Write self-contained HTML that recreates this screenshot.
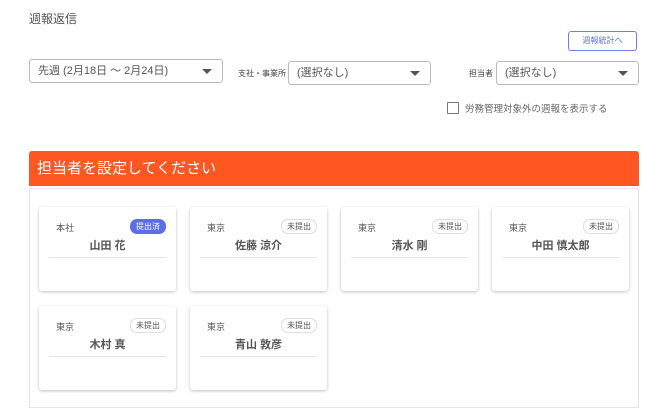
<!DOCTYPE html>
<html><head><meta charset="utf-8"><style>
body{margin:0;width:670px;height:416px;background:#fff;font-family:"Liberation Sans","Noto Sans CJK JP",sans-serif;color:#333;position:relative;overflow:hidden}
.a{position:absolute}
.sel{position:absolute;border:1px solid #bbb;border-radius:3px;background:#fff;font-size:11px;color:#555;box-sizing:border-box;padding-left:8px;line-height:22px}
.sel:after{content:"";position:absolute;right:10px;top:9px;border-left:5px solid transparent;border-right:5px solid transparent;border-top:5px solid #555}
.lbl{position:absolute;font-size:8px;color:#444}
.card{position:absolute;width:137px;height:84px;background:#fff;border-radius:3px;box-shadow:0 1px 3px rgba(0,0,0,.25)}
.loc{position:absolute;left:17px;top:14px;font-size:9px;color:#555}
.bd{position:absolute;right:10px;top:12px;height:13px;width:34px;text-align:center;border-radius:7px;font-size:8px;line-height:13px;border:1px solid #ddd;color:#555;background:#fff}
.bd.on{background:#5a6ee8;border-color:#5a6ee8;color:#fff}
.nm{position:absolute;left:0;right:0;top:30px;text-align:center;font-size:11px;font-weight:bold;color:#555}
.ln{position:absolute;left:10px;right:10px;top:50px;border-top:1px solid #e5e5e5}
</style></head><body>
<div class="a" style="left:29px;top:10px;font-size:12px;color:#555">週報返信</div>
<div class="a" style="left:568px;top:31px;width:69px;height:20px;box-sizing:border-box;border:1px solid #6c7ee8;border-radius:3px;color:#5a6ee8;font-size:8px;text-align:center;line-height:18px">週報統計へ</div>
<div class="sel" style="left:29px;top:59px;width:194px;height:24px">先週 (2月18日 〜 2月24日)</div>
<div class="lbl" style="left:238px;top:68px">支社・事業所</div>
<div class="sel" style="left:288px;top:61px;width:143px;height:24px">(選択なし)</div>
<div class="lbl" style="left:469px;top:68px">担当者</div>
<div class="sel" style="left:496px;top:61px;width:143px;height:24px">(選択なし)</div>
<div class="a" style="left:447px;top:102px;width:10px;height:10px;border:1.5px solid #777;border-radius:1px"></div>
<div class="a" style="left:465px;top:101px;font-size:9.5px;color:#666">労務管理対象外の週報を表示する</div>
<div class="a" style="left:29px;top:151px;width:610px;height:35px;background:#ff5722;border-radius:3px 3px 0 0;color:#fff;font-size:15px;line-height:35px;padding-left:8px;box-sizing:border-box">担当者を設定してください</div>
<div class="a" style="left:29px;top:188px;width:610px;height:220px;border:1px solid #e4e4e4;box-sizing:border-box"></div>
<div class="card" style="left:39px;top:207px"><div class="loc">本社</div><div class="bd on">提出済</div><div class="nm">山田 花</div><div class="ln"></div></div>
<div class="card" style="left:190px;top:207px"><div class="loc">東京</div><div class="bd">未提出</div><div class="nm">佐藤 涼介</div><div class="ln"></div></div>
<div class="card" style="left:341px;top:207px"><div class="loc">東京</div><div class="bd">未提出</div><div class="nm">清水 剛</div><div class="ln"></div></div>
<div class="card" style="left:492px;top:207px"><div class="loc">東京</div><div class="bd">未提出</div><div class="nm">中田 慎太郎</div><div class="ln"></div></div>
<div class="card" style="left:39px;top:306px"><div class="loc">東京</div><div class="bd">未提出</div><div class="nm">木村 真</div><div class="ln"></div></div>
<div class="card" style="left:190px;top:306px"><div class="loc">東京</div><div class="bd">未提出</div><div class="nm">青山 敦彦</div><div class="ln"></div></div>
</body></html>
